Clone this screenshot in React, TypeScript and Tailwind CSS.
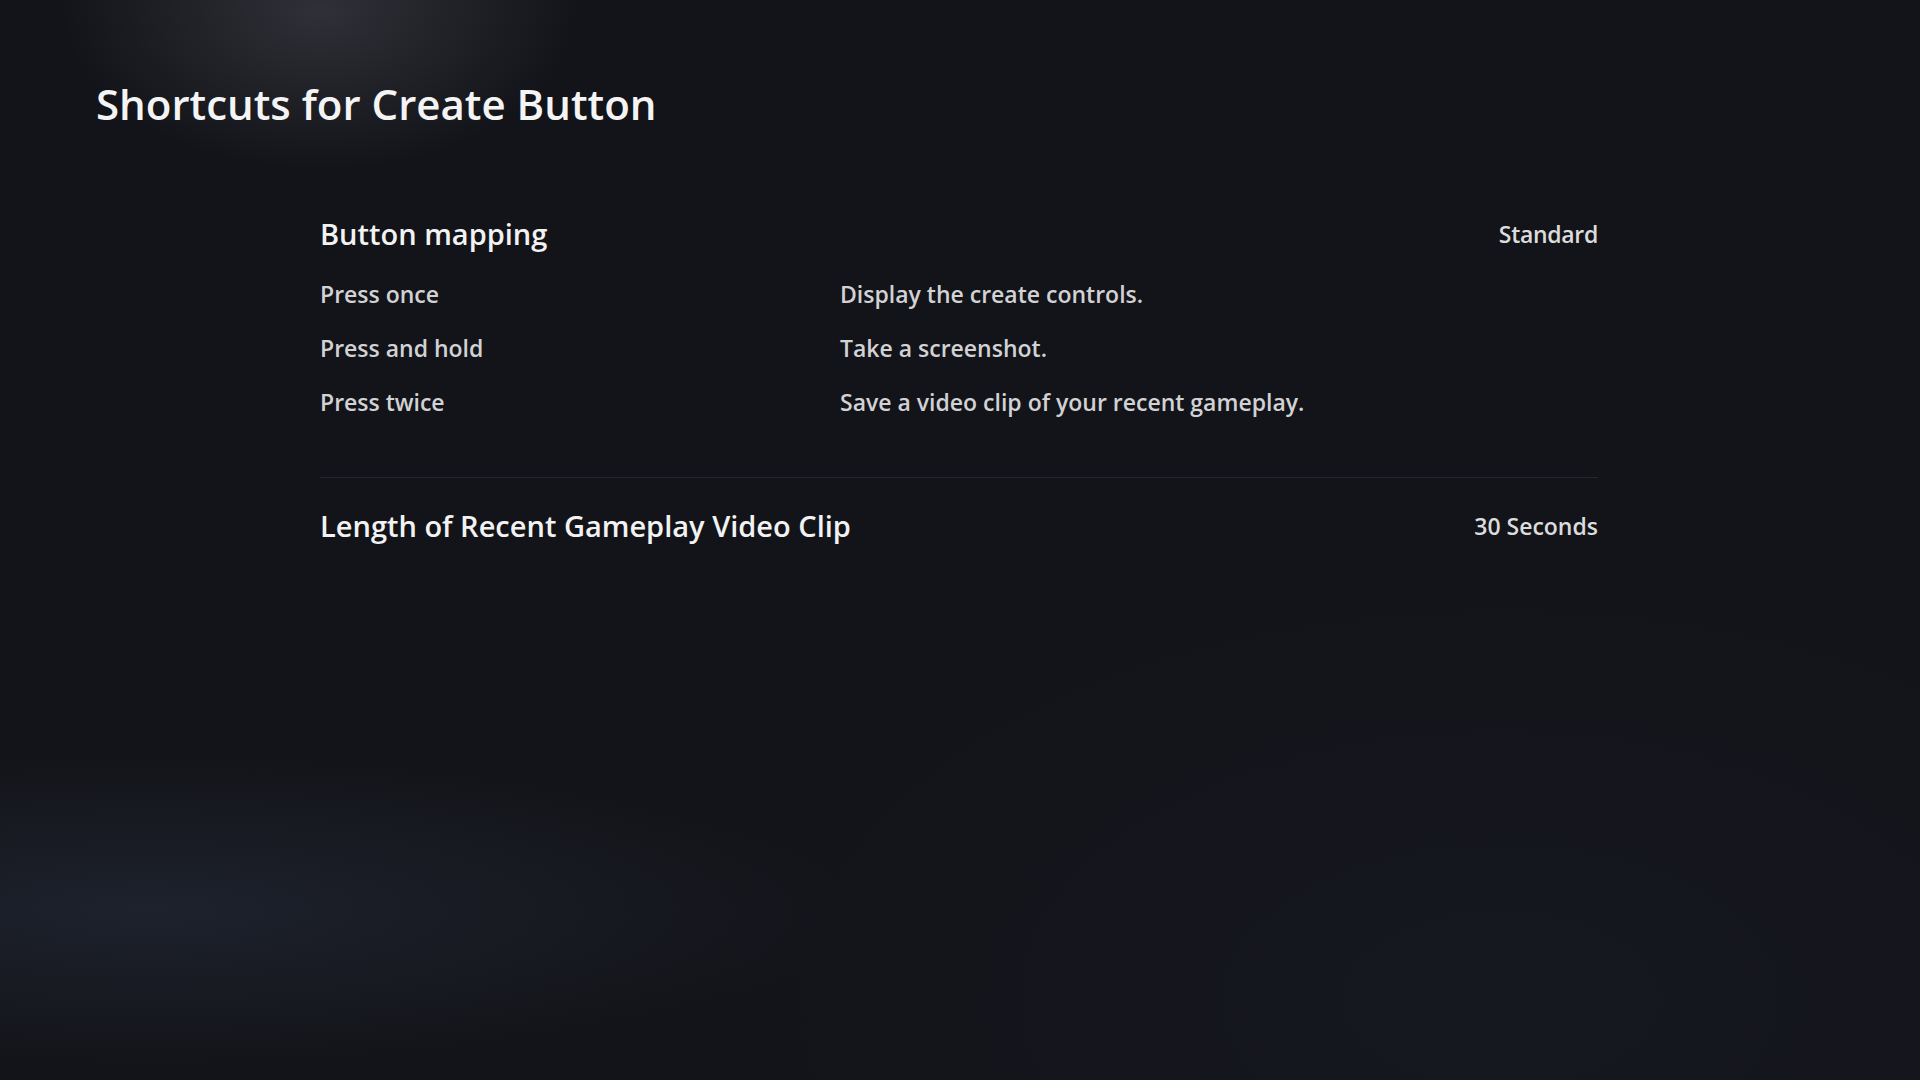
import React from "react";

const rows = [
  ["Press once", "Display the create controls."],
  ["Press and hold", "Take a screenshot."],
  ["Press twice", "Save a video clip of your recent gameplay."],
];

export default function App() {
  return (
    <div
      className="relative w-[1920px] h-[1080px] overflow-hidden bg-[#131419] text-white"
      style={{ fontFamily: '"Open Sans", "Noto Sans", sans-serif' }}
    >
      <div className="absolute inset-0 bg-[radial-gradient(ellipse_260px_160px_at_320px_10px,rgba(70,72,80,0.55),transparent)]" />
      <div className="absolute inset-0 bg-[radial-gradient(ellipse_700px_160px_at_150px_910px,rgba(42,50,68,0.45),transparent)]" />
      <div className="absolute inset-0 bg-[radial-gradient(ellipse_900px_500px_at_1500px_1000px,rgba(24,26,36,0.6),transparent)]" />
      <div className="relative">
        <h1 className="pl-[96px] pt-[74px] text-[42px] font-semibold leading-[60px] text-[#f4f4f4]">
          Shortcuts for Create Button
        </h1>
        <div className="ml-[320px] w-[1278px] mt-[80px]">
          <div className="flex items-center justify-between h-[40px]">
            <span className="text-[29px] font-semibold text-[#f2f2f2]">Button mapping</span>
            <span className="text-[23px] font-semibold text-[#dcdcdc] tracking-[-0.3px]">Standard</span>
          </div>
          <div className="mt-[25px] flex flex-col gap-[24px]">
            {rows.map(([a, b]) => (
              <div key={a} className="flex h-[30px] items-center text-[23px] font-semibold text-[#d2d2d4]">
                <span className="w-[520px]">{a}</span>
                <span>{b}</span>
              </div>
            ))}
          </div>
          <div className="mt-[60px] h-px bg-[#26272e]" />
          <div className="mt-[28px] flex items-center justify-between h-[40px]">
            <span className="text-[29px] font-semibold text-[#f2f2f2]">Length of Recent Gameplay Video Clip</span>
            <span className="text-[23px] font-semibold text-[#dcdcdc]">30 Seconds</span>
          </div>
        </div>
      </div>
    </div>
  );
}
